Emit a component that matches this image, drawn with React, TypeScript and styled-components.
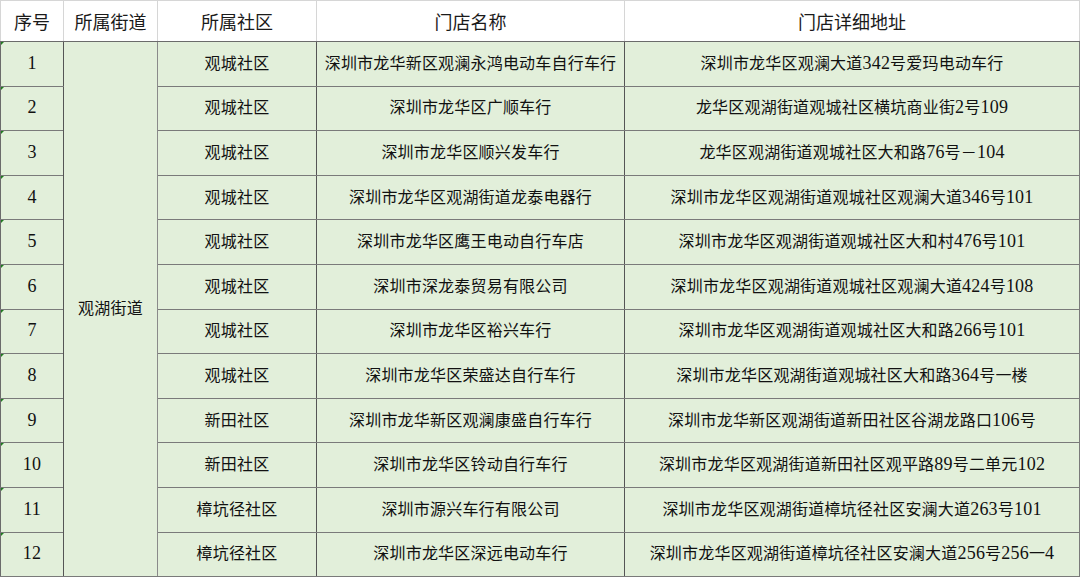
import React from 'react'
import styled, { createGlobalStyle } from 'styled-components'

const GlobalStyle = createGlobalStyle`
html, body {
  margin: 0;
  padding: 0;
  background: #ffffff;
}
`

const rows = [
  ['1', '观城社区', '深圳市龙华新区观澜永鸿电动车自行车行', '深圳市龙华区观澜大道342号爱玛电动车行'],
  ['2', '观城社区', '深圳市龙华区广顺车行', '龙华区观湖街道观城社区横坑商业街2号109'],
  ['3', '观城社区', '深圳市龙华区顺兴发车行', '龙华区观湖街道观城社区大和路76号－104'],
  ['4', '观城社区', '深圳市龙华区观湖街道龙泰电器行', '深圳市龙华区观湖街道观城社区观澜大道346号101'],
  ['5', '观城社区', '深圳市龙华区鹰王电动自行车店', '深圳市龙华区观湖街道观城社区大和村476号101'],
  ['6', '观城社区', '深圳市深龙泰贸易有限公司', '深圳市龙华区观湖街道观城社区观澜大道424号108'],
  ['7', '观城社区', '深圳市龙华区裕兴车行', '深圳市龙华区观湖街道观城社区大和路266号101'],
  ['8', '观城社区', '深圳市龙华区荣盛达自行车行', '深圳市龙华区观湖街道观城社区大和路364号一楼'],
  ['9', '新田社区', '深圳市龙华新区观澜康盛自行车行', '深圳市龙华新区观湖街道新田社区谷湖龙路口106号'],
  ['10', '新田社区', '深圳市龙华区铃动自行车行', '深圳市龙华区观湖街道新田社区观平路89号二单元102'],
  ['11', '樟坑径社区', '深圳市源兴车行有限公司', '深圳市龙华区观湖街道樟坑径社区安澜大道263号101'],
  ['12', '樟坑径社区', '深圳市龙华区深远电动车行', '深圳市龙华区观湖街道樟坑径社区安澜大道256号256一4'],
]

// digits in the sheet are drawn wider than the CJK text around them
const Text = ({ value }: { value: string }) => (
  <>
    {value.split(/(\d+)/).map((part, i) =>
      /^\d+$/.test(part) ? <Digits key={i}>{part}</Digits> : part
    )}
  </>
)

const App = () => {
  return (
    <Page>
      <GlobalStyle />
      <Table>
        <colgroup>
          <Col $w={63} />
          <Col $w={94} />
          <Col $w={159} />
          <Col $w={308} />
          <Col $w={455} />
        </colgroup>
        <thead>
          <tr>
            <Head>序号</Head>
            <Head>所属街道</Head>
            <Head>所属社区</Head>
            <Head>门店名称</Head>
            <Head>门店详细地址</Head>
          </tr>
        </thead>
        <tbody>
          {rows.map((r, i) => (
            <Row key={r[0]}>
              <NumCell><Text value={r[0]} /></NumCell>
              {i === 0 && <StreetCell rowSpan={rows.length}>观湖街道</StreetCell>}
              <Cell>{r[1]}</Cell>
              <Cell>{r[2]}</Cell>
              <Cell $last><Text value={r[3]} /></Cell>
            </Row>
          ))}
        </tbody>
      </Table>
    </Page>
  )
}

export default App

const Page = styled.div`
width: 1080px;
height: 577px;
overflow: hidden;
background: #ffffff;
`
const Table = styled.table`
border-collapse: collapse;
table-layout: fixed;
width: 1079px;
`
const Col = styled.col<{ $w: number }>`
width: ${p => p.$w}px;
`
const Head = styled.th`
height: 40px;
padding: 0;
border: 1px solid #d6d6d6;
border-bottom: 1px solid #6b6b6b;
font-family: "Noto Sans CJK SC", "Noto Sans", sans-serif;
font-size: 18px;
line-height: 20px;
font-weight: 400;
color: #1a1a1a;
text-align: center;
vertical-align: middle;
background: #ffffff;
`
const Row = styled.tr`
height: 44.6px;
`
const Cell = styled.td<{ $last?: boolean }>`
padding: 0;
border-top: 1px solid #7a7a7a;
border-bottom: 1px solid #7a7a7a;
border-left: 1px solid #555555;
border-right: 1px solid ${p => (p.$last ? '#7a7a7a' : '#555555')};
background: #e2efda;
font-family: "Liberation Serif", "Noto Sans CJK SC", serif;
font-size: 16px;
line-height: 20px;
letter-spacing: 0.2px;
color: #111111;
text-align: center;
vertical-align: middle;
white-space: nowrap;
`
const Digits = styled.span`
font-family: "Liberation Serif", serif;
font-size: 18px;
line-height: 1;
`
const NumCell = styled(Cell)`
position: relative;
border-left: 1px solid #6b6b6b;

&::before {
  content: '';
  position: absolute;
  left: 0;
  top: 0;
  border-top: 3px solid #1f7a1f;
  border-right: 3px solid transparent;
}
`
const StreetCell = styled(Cell)`
border-right: 1px solid #8a8a8a;
`
